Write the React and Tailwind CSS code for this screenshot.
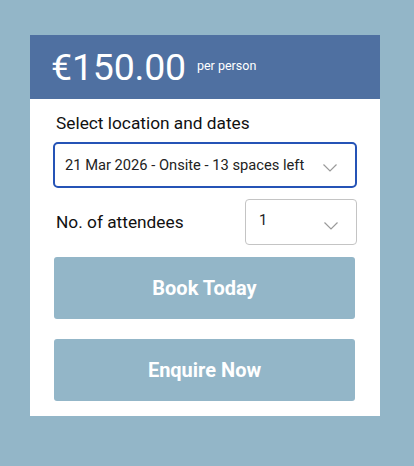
import React from "react";

function Chevron() {
  return (
    <svg width="14" height="8" viewBox="0 0 14 8" fill="none" className="shrink-0">
      <path d="M0.5 0.5 L7 7 L13.5 0.5" stroke="#9a9a9a" strokeWidth="1.2" />
    </svg>
  );
}

export default function App() {
  return (
    <div className="min-h-[466px] w-[414px] bg-[#93b6c8] pt-[35px] pl-[30px]" style={{ fontFamily: "Roboto, 'Liberation Sans', sans-serif" }}>
      <div className="w-[350px] bg-white pb-[15px]">
        <div className="h-[64px] bg-[#4f70a1] flex items-center pl-[21px] pt-[2px] text-white">
          <span className="text-[37.5px] leading-none tracking-[-0.2px]">€150.00</span>
          <span className="text-[12.5px] ml-[11px] mb-[4px]">per person</span>
        </div>
        <div className="px-[23px]">
          <div className="text-[17.3px] text-[#111] mt-[14px] ml-[3px] leading-[21px]">Select location and dates</div>
          <div className="mt-[8px] h-[46px] border-2 border-[#2553b6] rounded-[5px] flex items-center justify-between pl-[10px] pr-[18px]">
            <span className="text-[14.7px] text-[#222]">21 Mar 2026 - Onsite - 13 spaces left</span>
            <div className="mt-[5px]"><Chevron /></div>
          </div>
          <div className="mt-[11px] flex items-center justify-between">
            <span className="text-[17.3px] text-[#111] ml-[3px] mt-[2px]">No. of attendees</span>
            <div className="w-[112px] h-[46px] border border-[#c4c4c4] rounded-[4px] flex items-center justify-between pl-[13px] pr-[18px]">
              <span className="text-[14.7px] text-[#222] mb-[4px]">1</span>
              <div className="mt-[7px]"><Chevron /></div>
            </div>
          </div>
          <button className="mt-[12px] ml-[1px] w-[301px] h-[62px] rounded-[3px] bg-[#93b6c8] text-white text-[20px] font-bold flex items-center justify-center">Book Today</button>
          <button className="mt-[20px] ml-[1px] w-[301px] h-[62px] rounded-[3px] bg-[#93b6c8] text-white text-[20px] font-bold flex items-center justify-center">Enquire Now</button>
        </div>
      </div>
    </div>
  );
}
